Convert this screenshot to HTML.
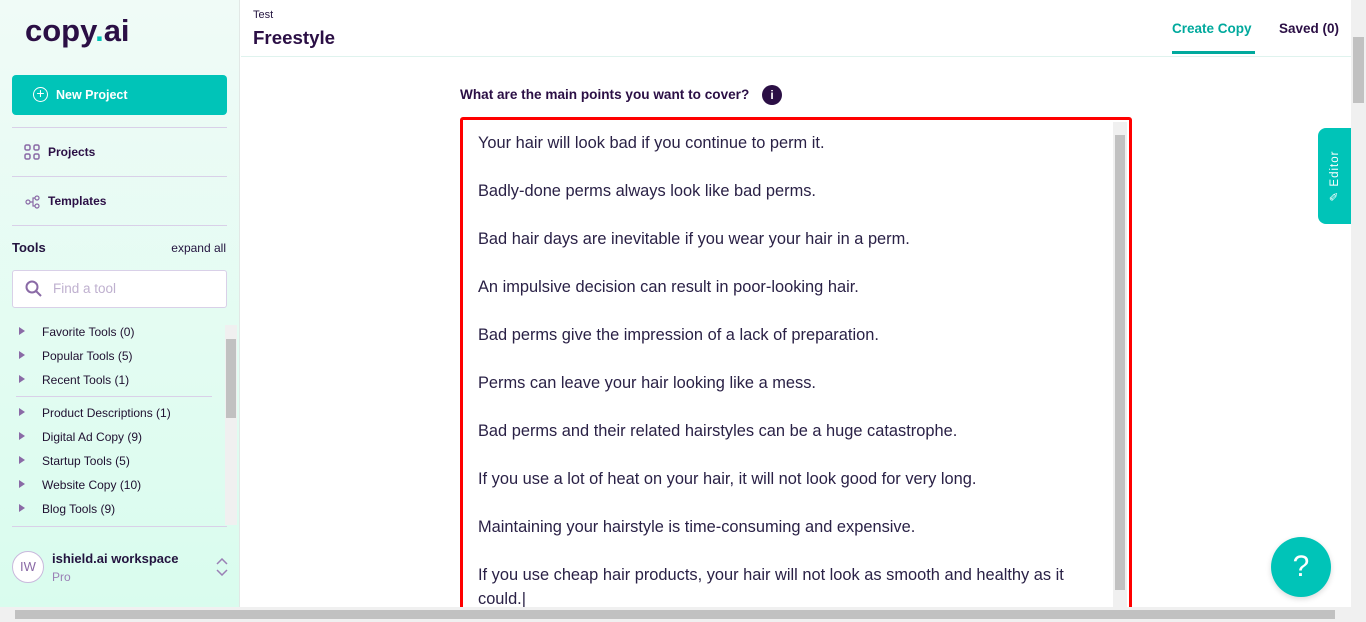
<!DOCTYPE html>
<html><head><style>
*{margin:0;padding:0;box-sizing:border-box}
body{width:1366px;height:622px;overflow:hidden;font-family:"Liberation Sans",sans-serif;background:#fff;position:relative;color:#23143f}
.side{position:absolute;left:0;top:0;width:240px;height:607px;background:linear-gradient(#f0fbf7,#d9fcee);border-right:1px solid #e2e8e6}
.logo{position:absolute;left:25px;top:13px;font-size:31px;font-weight:bold;color:#2b0f45;letter-spacing:0px}
.logo span{color:#00c2b8}
.np{position:absolute;left:12px;top:75px;width:215px;height:40px;background:#00c4b8;border-radius:4px;color:#fff;font-size:12.5px;font-weight:bold;padding:13px 0 0 44px}
.np i{position:absolute;left:21px;top:12px;width:15px;height:15px;border:1.6px solid #fff;border-radius:50%;font-style:normal;font-size:14px;line-height:11px;text-align:center;font-weight:normal}
.hr{position:absolute;left:12px;width:215px;height:1px;background:#d9d0e8}
.nav{position:absolute;left:48px;font-size:12px;font-weight:bold;color:#2b0f45}
.tools{position:absolute;left:12px;top:240px;font-size:13px;font-weight:bold}
.ex{position:absolute;right:13px;top:241px;font-size:12px}
.search{position:absolute;left:12px;top:270px;width:215px;height:38px;background:#fff;border:1px solid #d9d0e8;border-radius:3px;color:#bfb0cf;font-size:13.5px;padding:10px 0 0 40px}
.item{position:absolute;left:42px;font-size:12px;color:#1f1030}
.tri{position:absolute;left:19px;width:0;height:0;border-left:6px solid #8a6aa6;border-top:4.5px solid transparent;border-bottom:4.5px solid transparent}
.main-h{position:absolute;left:241px;top:0;width:1110px;height:57px;border-bottom:1px solid #dff3ee}
.ta{position:absolute;left:460px;top:117px;width:672px;height:500px;border:3px solid #f00;border-radius:3px;font-size:16.4px;color:#2a2146;padding:11px 0 0 15px;line-height:24px}
.ta p{height:48px;white-space:nowrap}
</style></head><body>
<div class="side">
<div class="logo">copy<span>.</span>ai</div>
<div class="np"><i>+</i>New Project</div>
<div class="hr" style="top:127px"></div>
<svg style="position:absolute;left:24px;top:144px" width="16" height="16"><g fill="none" stroke="#8a6aa6" stroke-width="1.5"><rect x="1" y="1" width="5" height="5" rx="1.5"/><rect x="10" y="1" width="5" height="5" rx="1.5"/><rect x="1" y="10" width="5" height="5" rx="1.5"/><rect x="10" y="10" width="5" height="5" rx="1.5"/></g></svg>
<div class="nav" style="top:145px">Projects</div>
<div class="hr" style="top:176px"></div>
<svg style="position:absolute;left:25px;top:195px" width="16" height="14"><g fill="none" stroke="#8a6aa6" stroke-width="1.2"><circle cx="3" cy="7" r="2"/><circle cx="12" cy="3" r="2"/><circle cx="12" cy="11" r="2"/><path d="M5 7H8V3H10M8 7V11H10"/></g></svg>
<div class="nav" style="top:194px">Templates</div>
<div class="hr" style="top:225px"></div>
<div class="tools">Tools</div><div class="ex">expand all</div>
<div class="search">Find a tool<svg style="position:absolute;left:12px;top:9px" width="18" height="18"><circle cx="7" cy="7" r="5.5" fill="none" stroke="#8a6aa6" stroke-width="2"/><path d="M11 11L16 16" stroke="#8a6aa6" stroke-width="2"/></svg></div>
<div class="tri" style="top:327px"></div><div class="item" style="top:325px">Favorite Tools (0)</div>
<div class="tri" style="top:351px"></div><div class="item" style="top:349px">Popular Tools (5)</div>
<div class="tri" style="top:375px"></div><div class="item" style="top:373px">Recent Tools (1)</div>
<div class="hr" style="top:396px;left:16px;width:196px"></div>
<div class="tri" style="top:408px"></div><div class="item" style="top:406px">Product Descriptions (1)</div>
<div class="tri" style="top:432px"></div><div class="item" style="top:430px">Digital Ad Copy (9)</div>
<div class="tri" style="top:456px"></div><div class="item" style="top:454px">Startup Tools (5)</div>
<div class="tri" style="top:480px"></div><div class="item" style="top:478px">Website Copy (10)</div>
<div class="tri" style="top:504px"></div><div class="item" style="top:502px">Blog Tools (9)</div>
<div style="position:absolute;left:225px;top:325px;width:12px;height:200px;background:#f0f0f0"></div>
<div style="position:absolute;left:226px;top:339px;width:10px;height:79px;background:#c1c1c1"></div>
<div class="hr" style="top:526px"></div>
<div style="position:absolute;left:12px;top:551px;width:32px;height:32px;border:1px solid #c9b8dc;border-radius:50%;background:#fff;font-size:13px;color:#8a6aa6;text-align:center;line-height:30px">IW</div>
<div style="position:absolute;left:52px;top:551px;font-size:13px;font-weight:bold">ishield.ai workspace</div>
<div style="position:absolute;left:52px;top:570px;font-size:12px;color:#9a80b5">Pro</div>
<svg style="position:absolute;left:215px;top:558px" width="14" height="18"><path d="M2 6L7 1L12 6M2 12L7 17L12 12" fill="none" stroke="#9a80b5" stroke-width="1.5"/></svg>
</div>
<div class="main-h">
<div style="position:absolute;left:12px;top:9px;font-size:11px">Test</div>
<div style="position:absolute;left:12px;top:27px;font-size:18.7px;font-weight:bold;color:#2b0f45">Freestyle</div>
<div style="position:absolute;left:931px;top:21px;font-size:13.5px;font-weight:bold;color:#00a99d">Create Copy</div>
<div style="position:absolute;left:931px;top:51px;width:83px;height:3px;background:#00a99d"></div>
<div style="position:absolute;left:1038px;top:21px;font-size:13.5px;font-weight:bold;color:#2b0f45">Saved (0)</div>
</div>
<div style="position:absolute;left:460px;top:87px;font-size:13.6px;font-weight:bold;color:#2b0f45">What are the main points you want to cover?</div>
<div style="position:absolute;left:762px;top:85px;width:20px;height:20px;border-radius:50%;background:#2b0f45;color:#fff;font-size:12px;font-weight:bold;text-align:center;line-height:20px">i</div>
<div class="ta">
<p>Your hair will look bad if you continue to perm it.</p>
<p>Badly-done perms always look like bad perms.</p>
<p>Bad hair days are inevitable if you wear your hair in a perm.</p>
<p>An impulsive decision can result in poor-looking hair.</p>
<p>Bad perms give the impression of a lack of preparation.</p>
<p>Perms can leave your hair looking like a mess.</p>
<p>Bad perms and their related hairstyles can be a huge catastrophe.</p>
<p>If you use a lot of heat on your hair, it will not look good for very long.</p>
<p>Maintaining your hairstyle is time-consuming and expensive.</p>
<p style="white-space:normal;width:600px">If you use cheap hair products, your hair will not look as smooth and healthy as it could.|</p>
<div style="position:absolute;left:650px;top:2px;width:14px;height:485px;background:#f0f0f0"><div style="margin:13px 2px 0;height:455px;background:#c1c1c1"></div></div>
</div>
<div style="position:absolute;left:1318px;top:128px;width:33px;height:96px;background:#00c4b8;border-radius:8px 0 0 8px"></div>
<div style="position:absolute;left:1334px;top:176px;transform:translate(-50%,-50%) rotate(-90deg);color:#fff;font-size:11.5px;letter-spacing:1px;white-space:nowrap">✎ Editor</div>
<div style="position:absolute;left:1271px;top:537px;width:60px;height:60px;border-radius:50%;background:#00c4b8;color:#fff;font-size:30px;text-align:center;line-height:60px;box-shadow:0 2px 6px rgba(0,0,0,.15)">?</div>
<div style="position:absolute;left:1351px;top:0;width:15px;height:607px;background:#f0f0f0"><div style="margin:37px 2px 0;height:66px;background:#c1c1c1"></div></div>
<div style="position:absolute;left:0;top:607px;width:1366px;height:15px;background:#f0f0f0"><div style="margin:3px 0 0 15px;width:1320px;height:9px;background:#c1c1c1"></div></div>
</body></html>
